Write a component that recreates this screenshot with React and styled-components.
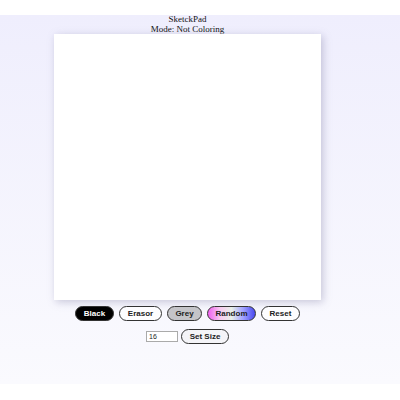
import React, { useState } from 'react';
import styled, { createGlobalStyle } from 'styled-components';

const GlobalStyle = createGlobalStyle`
  body {
    margin: 0;
    background: #ffffff;
  }
`;

const Page = styled.div`
  margin-top: 15px;
  height: 369px;
  background: linear-gradient(to bottom, #efeefd, #fafafe);
`;

const Wrapper = styled.div`
  width: 375px;
  display: flex;
  flex-direction: column;
  align-items: center;
`;

const Title = styled.div`
  font-family: "Liberation Serif", "Times New Roman", serif;
  font-size: 9px;
  line-height: 9.5px;
  color: #111;
  text-align: center;
`;

const Canvas = styled.div`
  width: 267px;
  height: 266px;
  background: #ffffff;
  box-shadow: 2px 2px 8px rgba(110, 105, 150, 0.35);
`;

const Controls = styled.div`
  display: flex;
  gap: 5px;
  margin-top: 6px;
`;

const Button = styled.button`
  height: 15px;
  padding: 0;
  border: 1px solid #333;
  border-radius: 8px;
  font-family: "Liberation Sans", Arial, sans-serif;
  font-size: 8px;
  font-weight: bold;
  white-space: nowrap;
  color: ${(p) => (p.$dark ? '#fff' : '#222')};
  background: ${(p) => p.$bg || '#fdfdff'};
  cursor: pointer;
  display: flex;
  align-items: center;
  justify-content: center;
`;

const SizeRow = styled.div`
  display: flex;
  align-items: center;
  gap: 3px;
  margin-top: 8px;
`;

const SizeInput = styled.input`
  box-sizing: border-box;
  width: 32px;
  height: 11px;
  padding: 0 2px;
  border: 1px solid #aaa;
  font-family: "Liberation Sans", Arial, sans-serif;
  font-size: 7px;
  color: #222;
  background: #fff;
`;

function App() {
  const [size, setSize] = useState('16');

  return (
    <>
      <GlobalStyle />
      <Page>
        <Wrapper>
          <Title>
            <div>SketckPad</div>
            <div>Mode: Not Coloring</div>
          </Title>
          <Canvas />
          <Controls>
            <Button $bg="#000" $dark style={{ width: 39 }}>Black</Button>
            <Button style={{ width: 43 }}>Erasor</Button>
            <Button $bg="#c4c4c8" style={{ width: 35 }}>Grey</Button>
            <Button
              $bg="linear-gradient(to right, #f060f0, #f8c8f0, #e8f0e8, #a0a0ff, #4848f0)"
              style={{ width: 49 }}
            >
              Random
            </Button>
            <Button style={{ width: 39 }}>Reset</Button>
          </Controls>
          <SizeRow>
            <SizeInput value={size} onChange={(e) => setSize(e.target.value)} />
            <Button $bg="#f4f4f8" style={{ width: 48 }}>Set Size</Button>
          </SizeRow>
        </Wrapper>
      </Page>
    </>
  );
}

export default App;
